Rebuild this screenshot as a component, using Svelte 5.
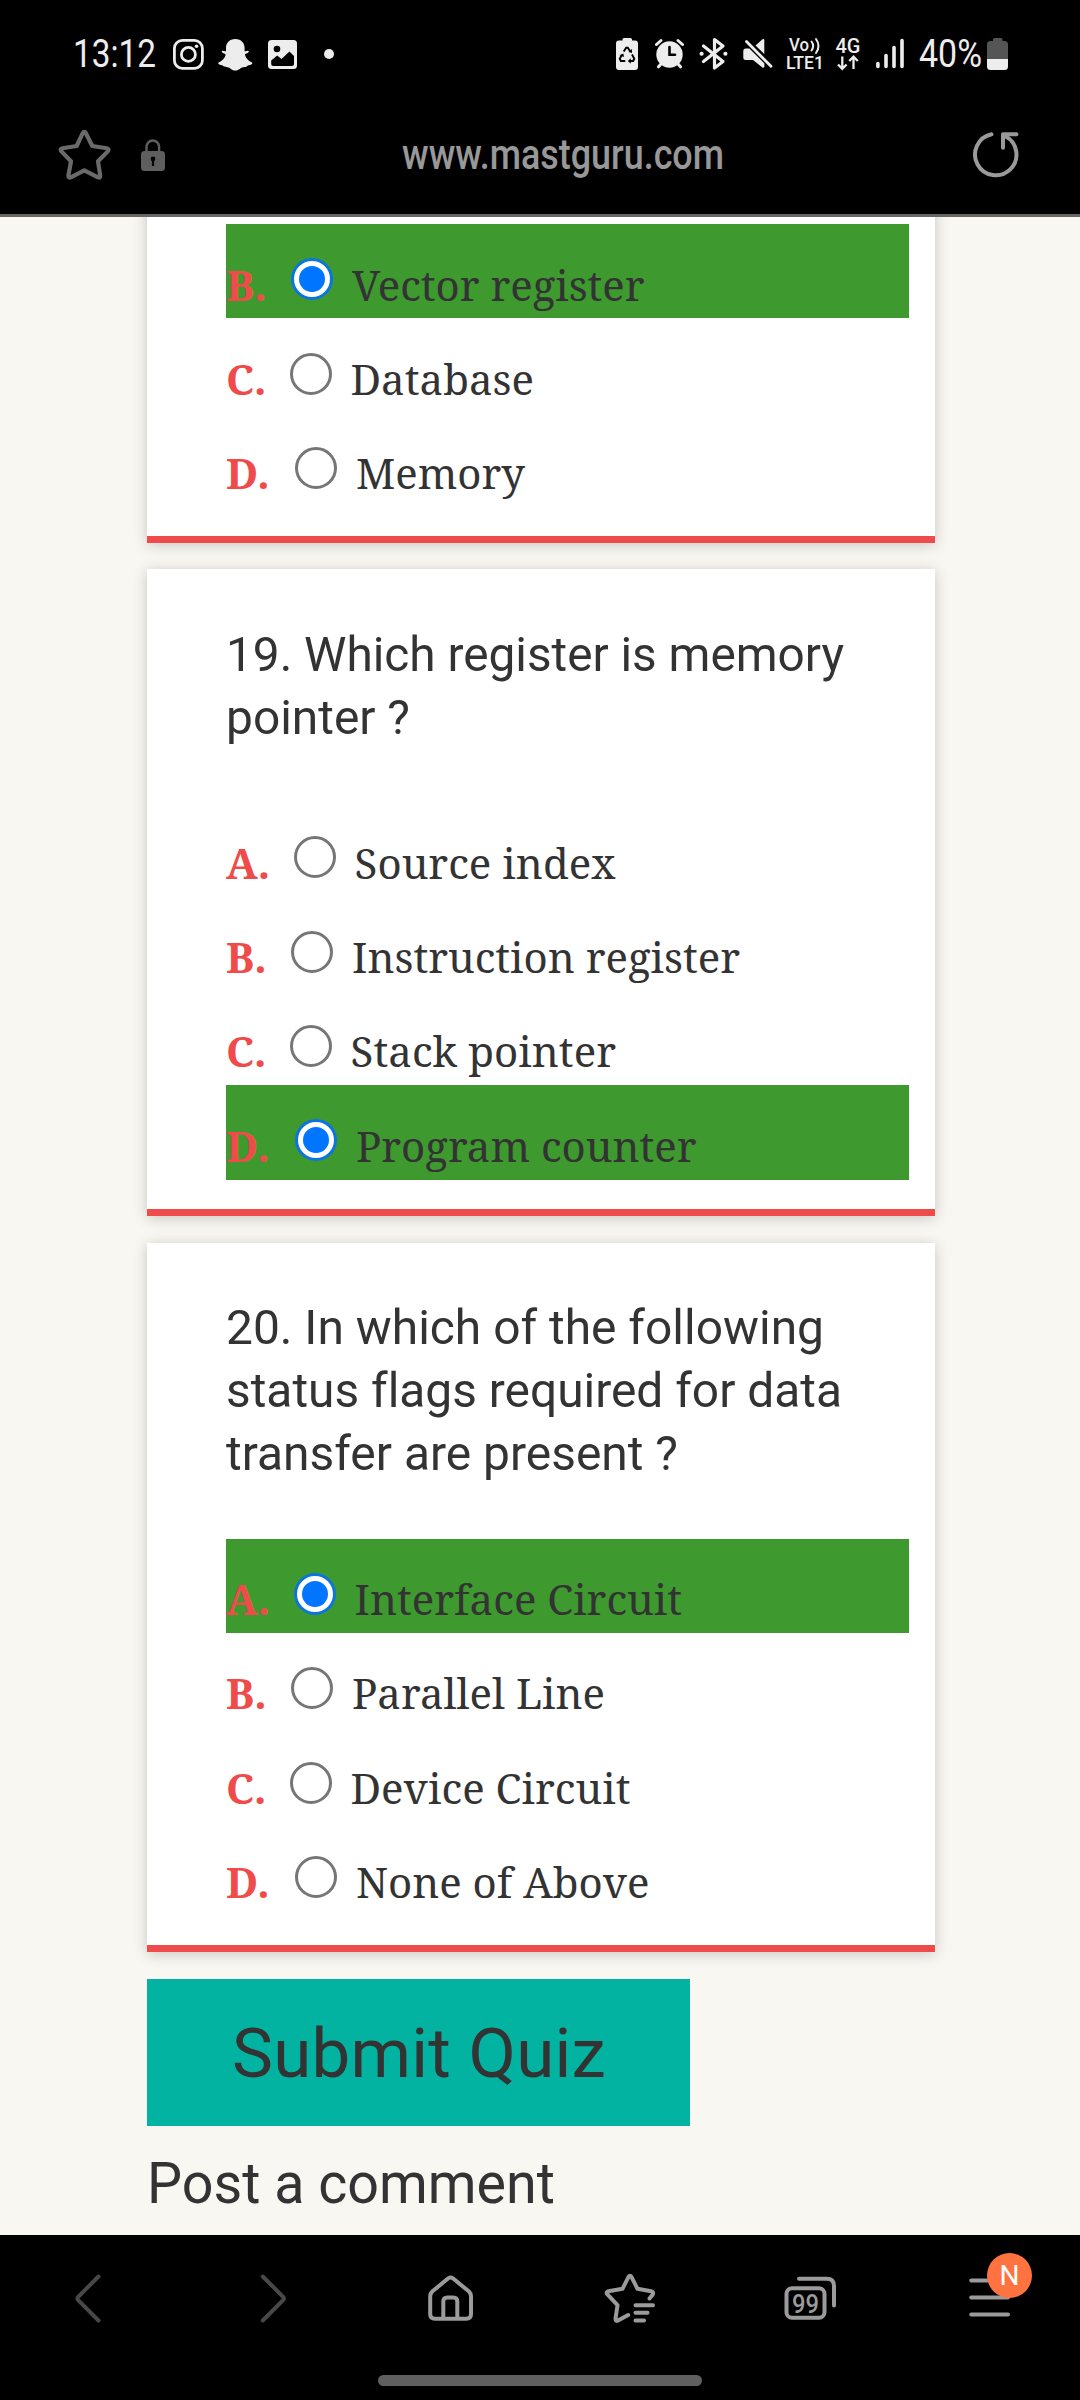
<script>
  // Makes a line occupy the given width: loose lines get letter-spacing,
  // lines that are too long are condensed.
  function fit(node, width) {
    const natural = node.getBoundingClientRect().width;
    const count = node.textContent.length;
    if (natural > width) {
      node.style.transform = `scaleX(${width / natural})`;
    } else {
      node.style.letterSpacing = `${(width - natural) / count}px`;
    }
  }

  const questions = [
    {
      lines: [],
      options: [
        { key: 'B', text: 'Vector register', width: 292.5, checked: true },
        { key: 'C', text: 'Database', width: 183.5 },
        { key: 'D', text: 'Memory', width: 169 }
      ]
    },
    {
      lines: [
        { text: '19. Which register is memory', width: 618 },
        { text: 'pointer ?', width: 184 }
      ],
      options: [
        { key: 'A', text: 'Source index', width: 261 },
        { key: 'B', text: 'Instruction register', width: 388 },
        { key: 'C', text: 'Stack pointer', width: 265.5 },
        { key: 'D', text: 'Program counter', width: 340.5, checked: true }
      ]
    },
    {
      lines: [
        { text: '20. In which of the following', width: 598 },
        { text: 'status flags required for data', width: 616 },
        { text: 'transfer are present ?', width: 452 }
      ],
      options: [
        { key: 'A', text: 'Interface Circuit', width: 327.5, checked: true },
        { key: 'B', text: 'Parallel Line', width: 253 },
        { key: 'C', text: 'Device Circuit', width: 280 },
        { key: 'D', text: 'None of Above', width: 293.5 }
      ]
    }
  ];
</script>

<div class="screen">
  <header class="status">
    <div class="group">
      <span class="time"><span class="fit" use:fit={83}>13:12</span></span>
      <svg class="insta" width="36" height="40" viewBox="170 34 36 40" fill="none" stroke="#ededed">
        <rect x="174.4" y="40.4" width="28" height="28" rx="8" stroke-width="2.8" />
        <circle cx="188.4" cy="54.4" r="7" stroke-width="2.8" />
        <circle cx="196.5" cy="46.3" r="1.8" fill="#ededed" stroke="none" />
      </svg>
      <svg class="ghost" width="36" height="40" viewBox="217 34 36 40" fill="#ededed">
        <path d="M235.300 39c-6 0-9.300 4-9.300 9v3.300c-1.400.3-2.500-.7-3.800-.5-.9.6-.2 1.700.8 2.200 1.500.7 2.800.9 2.600 2-.9 3.300-3.800 6.400-7 7.500-.9.5.1 1.800 1.200 2.300 1.500.6 3 .4 3.500 1.300.5.9 2.400 1.100 4.200 1.100 2.500 0 3.800 3.300 7.800 3.300s5.300-3.300 7.800-3.300c1.800 0 3.700-.2 4.200-1.100.5-.9 2-.7 3.500-1.300 1.100-.5 2.100-1.800 1.200-2.300-3.200-1.100-6.100-4.200-7-7.500-.2-1.100 1.100-1.300 2.600-2 1-.5 1.700-1.600.8-2.200-1.300-.2-2.400.8-3.800.5V48c0-5-3.300-9-9.300-9z" />
      </svg>
      <svg class="photo" width="30" height="40" viewBox="268 34 30 40">
        <rect x="268" y="40" width="29" height="29" rx="3.5" fill="#ededed" />
        <circle cx="277" cy="49" r="3.3" fill="#000" />
        <path d="M271.200 60.500l6-5 4.300 3.600 8-7.600 4.500 4.500v8a2 2 0 0 1-2 2h-18.800a2 2 0 0 1-2-2z" fill="#000" />
      </svg>
      <svg class="more" width="12" height="40" viewBox="323 34 12 40"><circle cx="329" cy="54" r="5" fill="#ededed" /></svg>
    </div>
    <div class="group">
      <svg width="24" height="40" viewBox="615 34 24 40">
        <path d="M622.500 40.500v-1a1.500 1.500 0 0 1 1.500-1.500h6.500a1.500 1.500 0 0 1 1.500 1.500v1h3a3 3 0 0 1 3 3V67a3 3 0 0 1-3 3h-16a3 3 0 0 1-3-3V43.500a3 3 0 0 1 3-3z" fill="#ededed" />
        <path d="M623.700 51.500l2.500-3.700h1.600l2.500 3.700M632 54.500l2.300 4.200-1.200 2.300h-3.600M625.300 61h-4.400l-1.200-2.300 2.200-3.700" fill="none" stroke="#000" stroke-width="1.9" />
        <path d="M630.800 58.300v5.400l-3-2.700zM619.500 55.300l3.800-1.900.8 3.700zM628.500 51.900l3.400 1 .1-4z" fill="#000" />
      </svg>
      <svg class="alarm" width="30" height="40" viewBox="655 34 30 40" fill="none" stroke="#ededed" stroke-linecap="round">
        <circle cx="669.5" cy="54.5" r="13.2" fill="#ededed" stroke="none" />
        <path d="M656.500 44.500l4.500-4M682.500 44.500l-4.500-4M661 64l-2.500 2.800M678 64l2.500 2.800" stroke-width="3" />
        <path d="M669.500 47v7.700h5.500" stroke="#000" stroke-width="2.6" />
      </svg>
      <svg class="bt" width="30" height="40" viewBox="699 34 30 40" fill="none" stroke="#ededed" stroke-width="3.2" stroke-linecap="round" stroke-linejoin="round">
        <path d="M703.500 46l19.500 15.500-8.500 6.500V39.500l8.500 6.500-19.500 15.500" />
        <path d="M701.500 53.700h.2M725.300 53.700h.2" stroke-width="4" />
      </svg>
      <svg class="mute" width="32" height="40" viewBox="742 34 32 40">
        <path d="M755.500 45.500l7-6.200c1-.8 1.800-.4 1.800.7v14zM743.300 51a2.500 2.500 0 0 1 2.500-2.500h3.600l15 15V66c0 1.700-1 2.200-2.300 1.200L753 60h-7.200a2.500 2.500 0 0 1-2.500-2.500z" fill="#ededed" />
        <path d="M746.500 41.500l24.500 24.800" stroke="#ededed" stroke-width="2.8" stroke-linecap="round" />
      </svg>
      <svg class="volte" width="40" height="40" viewBox="785 34 40 40" fill="#ededed">
        <text x="789" y="51.3" font-size="17.5" textLength="20" lengthAdjust="spacingAndGlyphs">Vo</text>
        <path d="M811.500 41.500q3.300 4.500 0 9M816 39q5 7 0 14" fill="none" stroke="#ededed" stroke-width="2" stroke-linecap="round" />
        <text x="786" y="69" font-size="18.5" textLength="38" lengthAdjust="spacingAndGlyphs">LTE1</text>
      </svg>
      <svg class="four" width="26" height="40" viewBox="835 34 26 40" fill="#ededed">
        <text x="835.5" y="52.7" font-size="19.5" textLength="25" lengthAdjust="spacingAndGlyphs">4G</text>
        <path d="M842.300 56.500v12M838 64.500l4.300 4.300 4.300-4.300M853.500 69v-12M849.200 61l4.300-4.300 4.300 4.300" fill="none" stroke="#ededed" stroke-width="2.3" />
      </svg>
      <svg class="signal" width="30" height="40" viewBox="875 34 30 40" stroke="#ededed" stroke-width="3.6" stroke-linecap="round">
        <path d="M877.900 63.500V66.500M886 55.500V66.500M894 47.500V66.500M902 40.500V66.500" />
      </svg>
      <span class="percent"><span class="fit" use:fit={63}>40%</span></span>
      <svg width="22" height="40" viewBox="987 34 22 40">
        <path d="M993 41v-1.500a1.500 1.500 0 0 1 1.500-1.500h6.500a1.500 1.500 0 0 1 1.500 1.500V41h2a3.500 3.500 0 0 1 3.500 3.500V59h-21V44.500A3.500 3.500 0 0 1 990.500 41z" fill="#555" />
        <path d="M987 59h21v7.500a3.500 3.500 0 0 1-3.500 3.500h-14a3.500 3.500 0 0 1-3.500-3.500z" fill="#ededed" />
      </svg>
    </div>
  </header>

  <div class="address">
    <div class="group">
      <svg width="54" height="54" viewBox="57 127 54 54" fill="none" stroke="#6a6a6a" stroke-width="4.2" stroke-linejoin="round">
        <path d="M82.700 133.200q1.600-2.600 3.200 0L92.300 146l14.400 2.300q2.800.6 1.300 2.800L98 161.300l2.200 14.200q.2 2.700-2.200 1.800L84.300 170.300l-13.500 7q-2.600.9-2.400-1.800l2.600-14.200L61.200 151.100q-1.500-2.200 1.300-2.800L76.700 146z" />
      </svg>
      <svg class="lock" width="26" height="36" viewBox="140 136 26 36">
        <path d="M146.500 151v-4a6.300 6.500 0 0 1 12.600 0v4" fill="none" stroke="#5e5e5e" stroke-width="2.4" />
        <rect x="141" y="151" width="24" height="20" rx="3.5" fill="#5e5e5e" />
        <circle cx="153" cy="159" r="2.4" fill="#000" />
        <rect x="151.900" y="160" width="2.2" height="6" fill="#000" />
      </svg>
    </div>
    <span class="url"><span class="fit" use:fit={322}>www.mastguru.com</span></span>
    <svg width="48" height="50" viewBox="971 129 48 50" fill="none" stroke="#9a9a9a" stroke-width="4" stroke-linecap="round" stroke-linejoin="round">
      <path d="M990.500 134.300a20.700 20.700 0 1 0 14 2" />
      <path d="M1015.500 134.300H1002v13.500" />
    </svg>
  </div>

  <main class="page">
    {#each questions as question, i}
      <section class="card" class:cut={i === 0}>
        {#if question.lines.length}
          <h2 class="title">
            {#each question.lines as line}
              <span class="line"><span class="fit" use:fit={line.width}>{line.text}</span></span>
            {/each}
          </h2>
        {/if}
        {#each question.options as option}
          <div class="option" class:checked={option.checked}>
            <span class="key key-{option.key.toLowerCase()}">{option.key}.</span>
            <span class="radio"></span>
            <span class="answer fit" use:fit={option.width}>{option.text}</span>
          </div>
        {/each}
      </section>
    {/each}
    <button class="submit"><span class="fit" use:fit={374}>Submit Quiz</span></button>
    <h3 class="post"><span class="fit" use:fit={408}>Post a comment</span></h3>
  </main>

  <nav class="toolbar">
    <svg width="30" height="54" viewBox="73 2271 30 54" fill="none" stroke="#484848" stroke-width="4" stroke-linecap="round" stroke-linejoin="round">
      <path d="M98.500 2276.500l-20.300 20.300q-1.500 1.700 0 3.400l20.300 20.300" />
    </svg>
    <svg class="forward" width="30" height="54" viewBox="259 2271 30 54" fill="none" stroke="#484848" stroke-width="4" stroke-linecap="round" stroke-linejoin="round">
      <path d="M262.800 2276.500l20.300 20.300q1.500 1.700 0 3.400l-20.300 20.300" />
    </svg>
    <svg class="home" width="48" height="54" viewBox="426 2271 48 54" fill="none" stroke="#9b9b9b" stroke-width="4" stroke-linejoin="round">
      <path d="M448 2278.500q2.600-1.900 5.200 0l15.500 12.800q2.300 2.100 2.300 5V2314q0 4.800-4.800 4.800h-31.200q-4.800 0-4.800-4.800v-17.700q0-2.900 2.300-5z" />
      <path d="M443.300 2318.500v-17q0-4 4-4h6q4 0 4 4v17" />
    </svg>
    <svg class="bookmarks" width="52" height="54" viewBox="604 2271 52 54" fill="none" stroke="#9b9b9b" stroke-width="4" stroke-linecap="round" stroke-linejoin="round">
      <path d="M649.500 2298.500l3.200-4q1.300-2.600-1.600-3.300l-13.600-2.400-5.800-11.500q-1.700-2.900-3.400 0l-5.800 11.500-14 2.400q-2.800.8-1.300 3l10.300 11-2 13.600q0 2.600 2.500 1.800l10.200-5.600" />
      <path d="M635.500 2305.200H653M635.500 2312.800H647.500M635.500 2320.500H644" />
    </svg>
    <svg class="tabs" width="56" height="54" viewBox="782 2271 56 54" fill="none" stroke="#9b9b9b" stroke-width="4" stroke-linecap="round">
      <rect x="786.5" y="2288.3" width="38" height="29.5" rx="5.5" />
      <path d="M799 2278.700h27.800q7.200 0 7.200 7.200v19.600" />
      <text x="792" y="2312.8" font-size="26" fill="#9b9b9b" stroke="none" textLength="27" lengthAdjust="spacingAndGlyphs">99</text>
    </svg>
    <div class="menu">
      <svg width="42" height="54" viewBox="969 2271 42 54" stroke="#9b9b9b" stroke-width="4" stroke-linecap="round">
        <path d="M971.200 2280.500H1008M971.200 2297.500H1008M971.200 2314.500H1008" />
      </svg>
      <span class="badge">N</span>
    </div>
  </nav>
  <div class="gesture"><span class="handle"></span></div>
</div>

<style>
  :global(body) {
    background: #000;
  }
  .screen {
    width: 1080px;
    height: 2400px;
    overflow: hidden;
    background: #000;
    font-family: Roboto, 'Liberation Sans', sans-serif;
    font-variant-ligatures: none;
    display: flex;
    flex-direction: column;
  }
  svg {
    display: block;
    flex: none;
  }
  svg text {
    font-weight: 500;
  }
  .fit {
    display: inline-block;
    white-space: pre;
    transform-origin: left center;
  }
  .group {
    display: flex;
    align-items: center;
  }

  .status {
    flex: none;
    height: 108px;
    display: flex;
    align-items: center;
    justify-content: space-between;
    padding: 0 71px 0 73px;
    box-sizing: border-box;
    color: #ededed;
    font-size: 38px;
  }
  .time {
    width: 84px;
  }
  .insta {
    margin-left: 13px;
  }
  .ghost {
    margin-left: 11px;
  }
  .photo {
    margin-left: 15px;
  }
  .more {
    margin-left: 25px;
  }
  .alarm {
    margin-left: 16px;
  }
  .bt {
    margin-left: 14px;
  }
  .mute {
    margin-left: 13px;
  }
  .volte {
    margin-left: 11px;
  }
  .four {
    margin-left: 10px;
  }
  .signal {
    margin-left: 14px;
  }
  .percent {
    width: 64px;
    margin: 0 4px 0 14px;
  }

  .address {
    flex: none;
    height: 109px;
    box-sizing: border-box;
    border-bottom: 3px solid #666;
    display: grid;
    grid-template-columns: 345px 1fr 48px;
    align-items: center;
    padding: 0 60px 14px 57px;
  }
  .lock {
    margin-left: 29px;
  }
  .url {
    color: #989898;
    font-size: 42px;
    font-weight: 500;
    line-height: 54px;
    padding-top: 2px;
  }

  .page {
    flex: none;
    height: 2018px;
    box-sizing: border-box;
    overflow: hidden;
    background: #f8f7f2;
    color: #333;
    padding: 0 145px 0 147px;
  }
  .card {
    background: #fff;
    margin-bottom: 27px;
    padding: 53.5px 26px 29px 79px;
    border-bottom: 7px solid #ef4b4a;
    box-shadow: 0 2px 14px rgba(0, 0, 0, 0.2);
  }
  .card.cut {
    height: 346px;
    box-sizing: border-box;
    margin: -20px 0 26px;
    padding-top: 27px;
    padding-bottom: 0;
  }
  .title {
    margin: 0 0 53.5px;
    font-size: 49px;
    font-weight: 400;
    line-height: 63px;
  }
  .line {
    display: block;
    height: 63px;
  }
  .option {
    height: 94.4px;
    box-sizing: border-box;
    padding-top: 30.5px;
    display: flex;
    align-items: flex-start;
    font-family: 'Noto Serif', 'DejaVu Serif Condensed', 'DejaVu Serif', serif;
    font-size: 42px;
    line-height: 60px;
  }
  .option.checked {
    background: #3e992f;
  }
  .key {
    color: #ef4b4a;
    font-weight: 700;
    flex: none;
  }
  .key-a {
    width: 68px;
  }
  .key-b {
    width: 65px;
  }
  .key-c {
    width: 64px;
  }
  .key-d {
    width: 69px;
  }
  .radio {
    flex: none;
    width: 42px;
    height: 42px;
    box-sizing: border-box;
    margin: 3.8px 18.5px 0 0;
    border: 3px solid #767676;
    border-radius: 50%;
    background: #fff;
    display: flex;
    align-items: center;
    justify-content: center;
  }
  .checked .radio {
    border-color: #0a75e0;
  }
  .checked .radio::after {
    content: '';
    width: 26px;
    height: 26px;
    border-radius: 50%;
    background: #0075ff;
  }
  .submit {
    display: block;
    width: 543px;
    height: 147px;
    border: 0;
    border-radius: 0;
    background: #03b3a1;
    color: #333;
    font: 400 69px/80px Roboto, sans-serif;
    padding: 3px 0 0 85px;
    text-align: left;
  }
  .post {
    margin: 25px 0 0;
    font-size: 56.5px;
    font-weight: 400;
    line-height: 66px;
  }

  .toolbar {
    flex: none;
    height: 126px;
    box-sizing: border-box;
    padding: 0 69px 0 73px;
    display: flex;
    align-items: center;
  }
  .forward {
    margin-left: 156px;
  }
  .home {
    margin-left: 137px;
  }
  .bookmarks {
    margin-left: 130px;
  }
  .tabs {
    margin-left: 126px;
  }
  .menu {
    position: relative;
    margin-left: 131px;
  }
  .badge {
    position: absolute;
    left: 18px;
    top: -18px;
    width: 45px;
    height: 45px;
    border-radius: 50%;
    background: #ff7340;
    color: #fff;
    font-size: 28px;
    line-height: 45px;
    text-align: center;
  }
  .gesture {
    flex: none;
    height: 39px;
    padding-top: 14px;
    box-sizing: border-box;
    display: flex;
    justify-content: center;
  }
  .handle {
    width: 324px;
    height: 11px;
    border-radius: 6px;
    background: #5f5f5f;
  }
</style>
